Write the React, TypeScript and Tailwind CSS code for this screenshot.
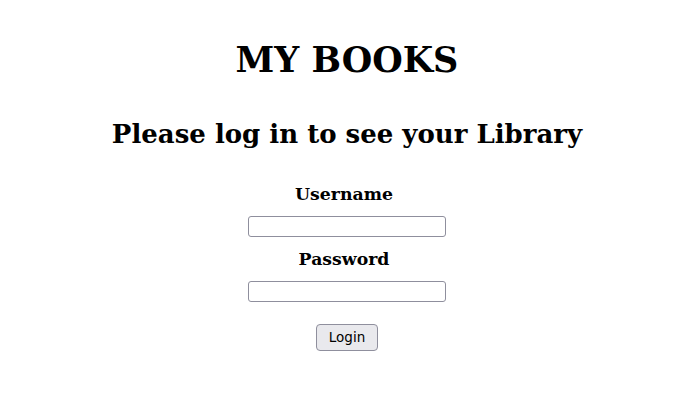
export default function App() {
  return (
    <div className="flex min-h-[401px] flex-col items-center bg-white text-black font-['DejaVu_Serif',serif]">
      <h1 className="mt-[42px] text-[35px] font-bold leading-[35px]">MY BOOKS</h1>
      <h2 className="mt-[44px] text-[26px] font-bold leading-[26px]">Please log in to see your Library</h2>
      <form className="mt-[38px] flex flex-col items-center" onSubmit={(e) => e.preventDefault()}>
        <label htmlFor="username" className="pr-[6px] text-[17.3px] font-bold leading-[18px]">Username</label>
        <input
          id="username"
          type="text"
          className="mt-[13px] h-[21px] w-[198px] rounded-[3px] border border-[#8f8f9d] bg-white px-1 text-[13px]"
        />
        <label htmlFor="password" className="mt-[13px] pr-[6px] text-[17.3px] font-bold leading-[18px]">Password</label>
        <input
          id="password"
          type="password"
          className="mt-[13px] h-[21px] w-[198px] rounded-[3px] border border-[#8f8f9d] bg-white px-1 text-[13px]"
        />
        <button
          type="submit"
          className="mt-[22px] h-[27px] w-[62px] rounded-[4px] border border-[#8f8f9d] bg-[#e9e9ed] text-[13.5px] font-['DejaVu_Sans',sans-serif] text-black"
        >
          Login
        </button>
      </form>
    </div>
  );
}
